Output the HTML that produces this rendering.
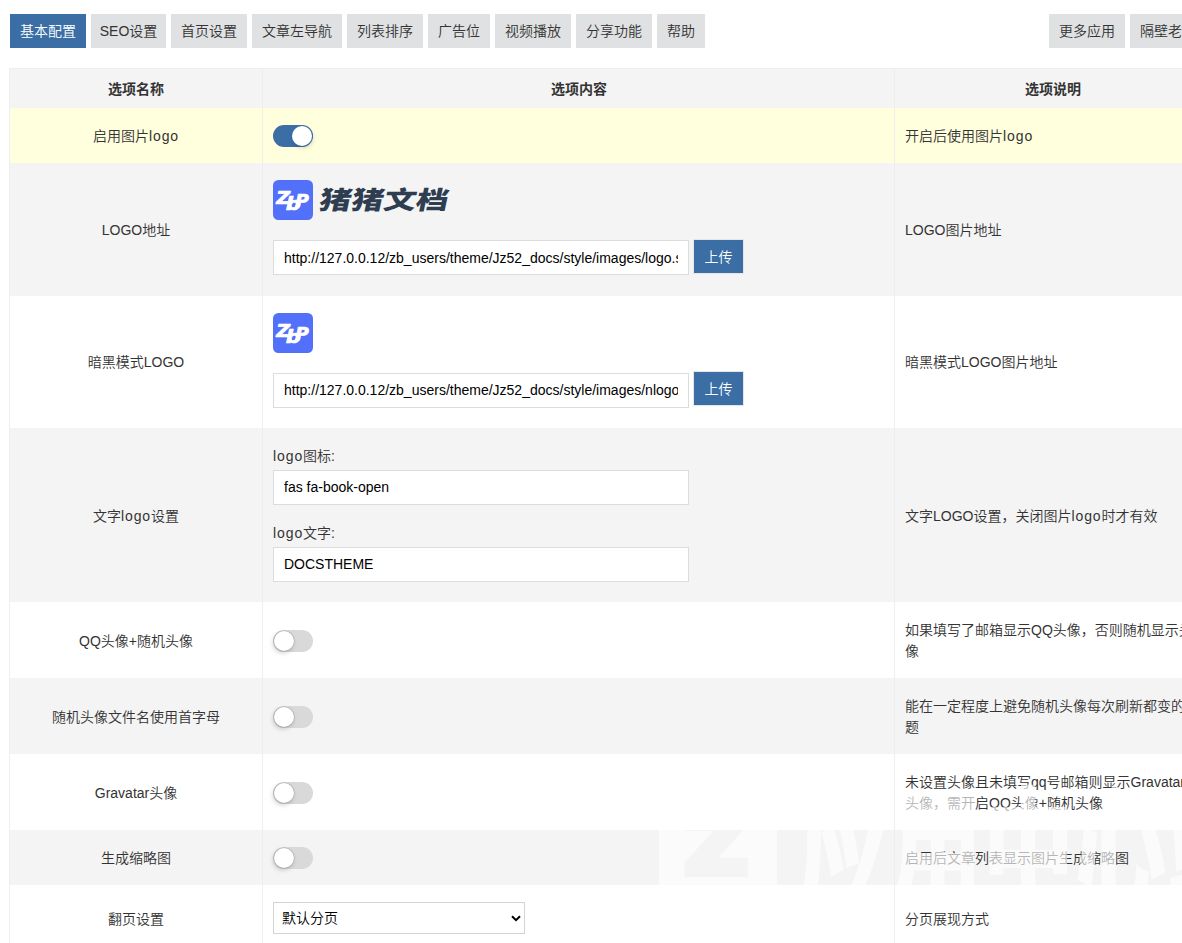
<!DOCTYPE html>
<html lang="zh-CN">
<head>
<meta charset="utf-8">
<title>主题配置</title>
<style>
*{box-sizing:border-box;}
html,body{margin:0;padding:0;background:#fff;}
body{width:1182px;height:943px;overflow:hidden;position:relative;font-family:"Liberation Sans","Noto Sans CJK SC",sans-serif;font-size:14px;color:#333;font-weight:350;}
#wrap{position:absolute;left:0;top:0;width:1221px;height:943px;overflow:hidden;}
.tabs a{position:absolute;top:14px;height:34px;line-height:35px;text-align:center;background:#e0e1e2;color:#333;font-size:14px;white-space:nowrap;text-decoration:none;}
.tabs a.on{background:#3a6ea5;color:#fff;}
.row{position:absolute;left:10px;width:1201px;background:#fff;}
.row.g{background:#f4f4f4;}
.row.y{background:#ffffdd;}
.row.h{background:#f4f4f4;font-weight:bold;}
.c{position:absolute;top:1px;height:100%;display:flex;align-items:center;line-height:21px;}
.r3 .c{top:0;}
.c1{left:0;width:252px;justify-content:center;text-align:center;}
.c2{left:253px;width:631px;padding-left:10px;}
.c3{left:885px;width:316px;padding:0 10px;}
.row.h .c{justify-content:center;}
.vl{position:absolute;top:68px;width:1px;height:900px;background:#eee;}
.hl{position:absolute;left:9px;top:68px;height:1px;width:1203px;background:#eee;}
.sw{position:absolute;left:263px;width:40px;height:22px;border-radius:11px;background:#d9d9d9;}
.sw i{position:absolute;left:1px;top:1px;width:20px;height:20px;border-radius:50%;background:#fff;box-shadow:0 0 0 .5px rgba(140,140,150,.6),-1px 2px 5px rgba(0,0,0,.2);}
.sw.on{background:#3a6ea5;}
.sw.on i{left:19px;box-shadow:0 0 0 .6px rgba(58,110,165,.9),1px 2px 4px rgba(0,0,0,.18);}
.inp{position:absolute;left:263px;width:416px;height:35px;line-height:35px;border:1px solid #dcdcdc;background:#fff;padding:0 10px;font-family:"Liberation Sans",sans-serif;font-size:14px;color:#000;overflow:hidden;white-space:nowrap;}
.inp span{display:block;overflow:hidden;white-space:nowrap;width:394px;}
.btn{position:absolute;left:683px;width:51px;height:35px;line-height:34px;background:#3a6ea5;border:1px solid #e6e6e6;color:#fff;text-align:center;font-size:14px;}
.lab{position:absolute;left:263px;line-height:21px;white-space:nowrap;}
.sel{position:absolute;left:263px;width:252px;height:32px;line-height:31px;border:1px solid #d4d4d4;background:#fff;padding:0 8px;color:#000;}
.l{letter-spacing:.9px;}
.ico{position:absolute;left:263px;width:40px;height:40px;}
</style>
</head>
<body>
<div id="wrap">
<div class="tabs">
<a class="on" style="left:10px;width:76px">基本配置</a>
<a style="left:91px;width:75px">SEO设置</a>
<a style="left:171px;width:76px">首页设置</a>
<a style="left:252px;width:90px">文章左导航</a>
<a style="left:347px;width:76px">列表排序</a>
<a style="left:428px;width:62px">广告位</a>
<a style="left:495px;width:76px">视频播放</a>
<a style="left:576px;width:76px">分享功能</a>
<a style="left:657px;width:48px">帮助</a>
<a style="left:1049px;width:76px">更多应用</a>
<a style="left:1130px;width:76px">隔壁老李</a>
</div>

<div class="row h" style="top:69px;height:39px"><div class="c c1">选项名称</div><div class="c c2" style="padding-left:1px">选项内容</div><div class="c c3">选项说明</div></div>

<div class="row y" style="top:108px;height:55px"><div class="c c1">启用图片<span class="l">logo</span></div><span class="sw on" style="top:17px"><i></i></span><div class="c c3">开启后使用图片<span class="l">logo</span></div></div>

<div class="row g" style="top:163px;height:133px"><div class="c c1">LOGO地址</div>
<svg class="ico" style="top:17px" viewBox="0 0 40 40"><rect width="40" height="40" rx="5.5" fill="#5270f9"/><g fill="#fff" stroke="#fff" stroke-width="0.7" stroke-linejoin="round" font-family="DejaVu Sans, sans-serif" font-weight="bold" font-style="oblique"><text transform="translate(3.3,23.8) scale(1.05,1)" font-size="18.4">Z</text><text transform="translate(22.2,26.6) scale(1.02,1)" font-size="18.2">P</text><text transform="translate(12.8,30.3) scale(1.15,1)" font-size="18.4">b</text></g></svg>
<svg style="position:absolute;left:305px;top:17px" width="150" height="40" viewBox="0 0 150 40"><text transform="translate(2.5,28.5) skewX(-12) scale(1.295,1)" x="0" y="0" font-family="Noto Sans CJK SC, sans-serif" font-weight="900" font-size="25" fill="#2e3d50">猪猪文档</text></svg>
<div class="inp" style="top:77px"><span>http://127.0.0.12/zb_users/theme/Jz52_docs/style/images/logo.svg</span></div><div class="btn" style="top:76px">上传</div>
<div class="c c3">LOGO图片地址</div></div>

<div class="row r3" style="top:296px;height:132px"><div class="c c1">暗黑模式LOGO</div>
<svg class="ico" style="top:17px" viewBox="0 0 40 40"><rect width="40" height="40" rx="5.5" fill="#5270f9"/><g fill="#fff" stroke="#fff" stroke-width="0.7" stroke-linejoin="round" font-family="DejaVu Sans, sans-serif" font-weight="bold" font-style="oblique"><text transform="translate(3.3,23.8) scale(1.05,1)" font-size="18.4">Z</text><text transform="translate(22.2,26.6) scale(1.02,1)" font-size="18.2">P</text><text transform="translate(12.8,30.3) scale(1.15,1)" font-size="18.4">b</text></g></svg>
<div class="inp" style="top:77px;line-height:33px"><span>http://127.0.0.12/zb_users/theme/Jz52_docs/style/images/nlogo.svg</span></div><div class="btn" style="top:75px">上传</div>
<div class="c c3">暗黑模式LOGO图片地址</div></div>

<div class="row g" style="top:428px;height:174px"><div class="c c1">文字<span class="l">logo</span>设置</div>
<div class="lab" style="top:18px"><span class="l">logo</span>图标:</div><div class="inp" style="top:42px;line-height:33px"><span>fas fa-book-open</span></div>
<div class="lab" style="top:95px"><span class="l">logo</span>文字:</div><div class="inp" style="top:119px;line-height:33px"><span>DOCSTHEME</span></div>
<div class="c c3">文字LOGO设置，关闭图片<span class="l">logo</span>时才有效</div></div>

<div class="row" style="top:602px;height:76px"><div class="c c1">QQ头像+随机头像</div><span class="sw" style="top:28px"><i></i></span><div class="c c3">如果填写了邮箱显示QQ头像，否则随机显示头<br>像</div></div>

<div class="row g" style="top:678px;height:76px"><div class="c c1">随机头像文件名使用首字母</div><span class="sw" style="top:28px"><i></i></span><div class="c c3">能在一定程度上避免随机头像每次刷新都变的问<br>题</div></div>

<div class="row" style="top:754px;height:76px"><div class="c c1">Gravatar头像</div><span class="sw" style="top:28px"><i></i></span><div class="c c3" style="white-space:nowrap">未设置头像且未填写qq号邮箱则显示Gravatar<br>头像，需开启QQ头像+随机头像</div></div>

<div class="row g" style="top:830px;height:55px"><div class="c c1">生成缩略图</div><span class="sw" style="top:17px"><i></i></span><div class="c c3">启用后文章列表显示图片生成缩略图</div></div>

<div class="row" style="top:885px;height:66px"><div class="c c1">翻页设置</div><div class="sel" style="top:17px">默认分页<svg style="position:absolute;right:3px;top:12px" width="10" height="7" viewBox="0 0 10 7"><path d="M1 1.2 L5 5.2 L9 1.2" fill="none" stroke="#000" stroke-width="2"/></svg></div><div class="c c3">分页展现方式</div></div>

<svg style="position:absolute;left:0;top:760px;pointer-events:none" width="1221" height="160" viewBox="0 760 1221 160">
<defs><mask id="zm" maskUnits="userSpaceOnUse" x="650" y="780" width="140" height="140"><rect x="650" y="780" width="140" height="140" fill="#fff"/><text transform="translate(685,873) scale(1.1,1)" font-family="DejaVu Sans, sans-serif" font-weight="bold" font-size="78" fill="#000" stroke="#000" stroke-width="8" stroke-linejoin="miter">Z</text></mask></defs>
<g fill="#fff" fill-opacity="0.64">
<rect x="659" y="788" width="118" height="118" mask="url(#zm)"/>
<text transform="translate(798,895) scale(0.72,1)" font-family="Noto Sans CJK SC, sans-serif" font-weight="900" font-size="128">应用中心站</text>
</g></svg>
<div class="hl"></div>
<div class="vl" style="left:9px"></div><div class="vl" style="left:262px"></div><div class="vl" style="left:894px"></div>
</div>
</body>
</html>
